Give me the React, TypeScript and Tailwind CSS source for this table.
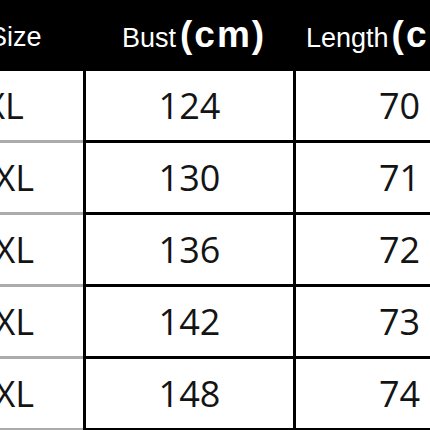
const rows = [
  { size: "XL", bust: "124", length: "70" },
  { size: "2XL", bust: "130", length: "71" },
  { size: "3XL", bust: "136", length: "72" },
  { size: "4XL", bust: "142", length: "73" },
  { size: "5XL", bust: "148", length: "74" },
];

function Unit() {
  return (
    <span className="font-bold text-[37px] leading-none tracking-[2px]">(cm)</span>
  );
}

export default function App() {
  return (
    <div className="w-[430px] h-[430px] overflow-hidden bg-white font-['Liberation_Sans',Arial,sans-serif]">
      <div className="w-[503px]">
        {/* header */}
        <div className="flex h-[71px] bg-black text-white">
          <div className="w-[83px] shrink-0 h-[68px] flex items-start pt-[24px] overflow-hidden">
            <span className="text-[27px] leading-none ml-[-11px] whitespace-nowrap">Size</span>
          </div>
          <div className="w-[3px] shrink-0" />
          <div className="w-[207px] shrink-0 flex items-start pt-[16px] pl-[36px] whitespace-nowrap">
            <div className="flex items-baseline gap-[4px]">
              <span className="text-[27px] leading-none">Bust</span>
              <Unit />
            </div>
          </div>
          <div className="w-[3px] shrink-0" />
          <div className="w-[207px] shrink-0 flex items-start pt-[16px] pl-[10px] whitespace-nowrap">
            <div className="flex items-baseline gap-[3px]">
              <span className="text-[27px] leading-none">Length</span>
              <Unit />
            </div>
          </div>
        </div>

        {/* body */}
        {rows.map((r) => (
          <div key={r.size} className="flex h-[72px] text-[#141414] font-['Open_Sans',sans-serif] text-[36px] leading-none">
            <div className="w-[83px] shrink-0 overflow-hidden border-b-[3px] border-[#ababab] flex items-center">
              <div className="w-[170px] shrink-0 ml-[-81px] text-center">{r.size}</div>
            </div>
            <div className="w-[3px] shrink-0 bg-black" />
            <div className="w-[207px] shrink-0 border-b-[3px] border-black flex items-center justify-center">
              {r.bust}
            </div>
            <div className="w-[3px] shrink-0 bg-black" />
            <div className="w-[207px] shrink-0 border-b-[3px] border-black flex items-center justify-center">
              {r.length}
            </div>
          </div>
        ))}
      </div>
    </div>
  );
}
